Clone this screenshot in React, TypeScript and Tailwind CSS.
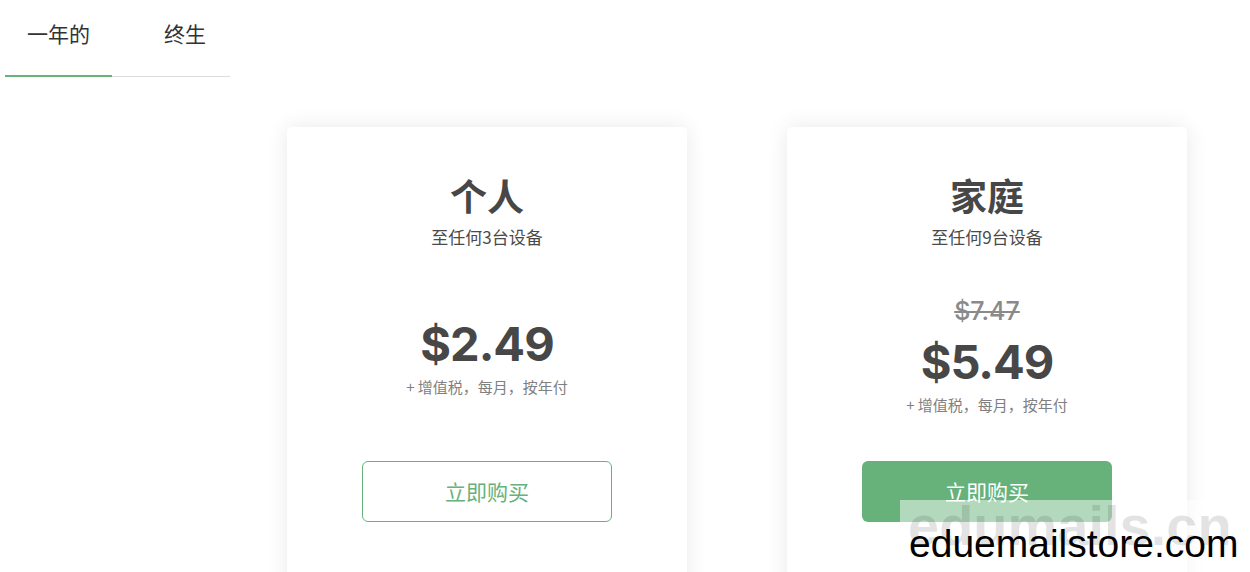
const cjk = "font-['Microsoft_YaHei','Noto_Sans_CJK_SC',sans-serif]";

type Plan = {
  name: string;
  devices: string;
  price: string;
  oldPrice?: string;
  filled?: boolean;
};

const plans: Plan[] = [
  { name: "个人", devices: "至任何3台设备", price: "$2.49" },
  { name: "家庭", devices: "至任何9台设备", price: "$5.49", oldPrice: "$7.47", filled: true },
];

function PlanCard({ plan }: { plan: Plan }) {
  return (
    <div className="w-[400px] h-[500px] shrink-0 bg-white rounded-[5px] shadow-[0_0_22px_rgba(0,0,0,0.09)] flex flex-col items-center pt-[46px]">
      <h2 className="text-[37px] leading-[44px] font-bold text-[#474747]">{plan.name}</h2>
      <p className="mt-[8px] text-[17px] leading-[24px] text-[#4a4a4a]">{plan.devices}</p>

      <div className="h-[212px] flex flex-col items-center justify-center">
        {plan.oldPrice && (
          <span className="text-[25px] leading-[32px] text-[#8a8a8a] line-through font-['Inter',sans-serif] font-medium">
            {plan.oldPrice}
          </span>
        )}
        <span className={`${plan.oldPrice ? "mt-[5px]" : ""} text-[47px] leading-[60px] font-bold text-[#474747] font-['Inter',sans-serif] tracking-[-1px]`}>
          {plan.price}
        </span>
        <span className="mt-[3px] text-[15px] leading-[20px] text-[#808080]">+ 增值税，每月，按年付</span>
      </div>

      <button
        className={
          plan.filled
            ? "w-[250px] h-[61px] rounded-[6px] bg-[#66b27a] text-white text-[21px]"
            : "w-[250px] h-[61px] rounded-[6px] border border-[#66b27a] text-[#66b27a] text-[21px] bg-white"
        }
      >
        立即购买
      </button>
    </div>
  );
}

export default function App() {
  return (
    <main className={`relative w-[1250px] h-[572px] overflow-hidden bg-white ${cjk}`}>
      <div className="ml-[5px] w-[225px] flex border-b border-[#dcdcdc]">
        <div className="w-[107px] h-[77px] -mb-px border-b-2 border-[#66b27a] pt-[19px] text-center text-[21px] leading-[28px] text-[#333]">
          一年的
        </div>
        <div className="w-[118px] h-[76px] pt-[19px] pl-[52px] text-[21px] leading-[28px] text-[#333]">
          终生
        </div>
      </div>

      <section className="mt-[50px] ml-[287px] flex gap-[100px]">
        {plans.map((p) => (
          <PlanCard key={p.name} plan={p} />
        ))}
      </section>

      <div className="absolute left-[900px] top-[500px] w-[345px] h-[72px] bg-white/50" />
      <span className="absolute left-[908px] top-[498px] text-[56px] leading-none font-bold text-black/[0.11] font-['Liberation_Sans',sans-serif]">
        edumails.cn
      </span>
      <span className="absolute left-[909px] top-[524px] text-[39px] leading-none text-black font-['Liberation_Sans',sans-serif]">
        eduemailstore.com
      </span>
    </main>
  );
}
